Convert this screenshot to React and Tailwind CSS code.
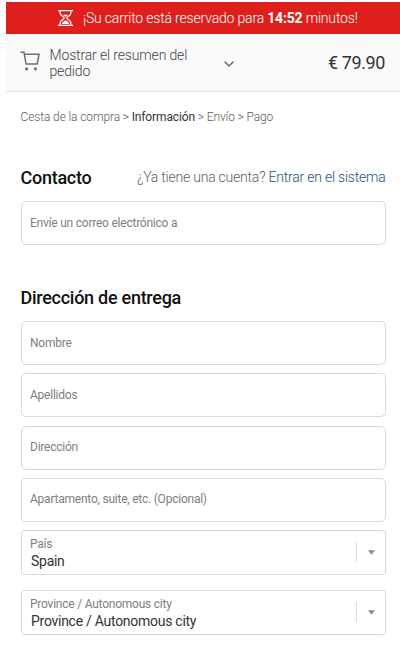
const ADDRESS_FIELDS = [
  { id: 'firstName', label: 'Nombre' },
  { id: 'lastName', label: 'Apellidos' },
  { id: 'address', label: 'Dirección' },
  { id: 'address2', label: 'Apartamento, suite, etc. (Opcional)' },
]

const SELECTS = [
  { id: 'country', label: 'País', value: 'Spain' },
  { id: 'province', label: 'Province / Autonomous city', value: 'Province / Autonomous city' },
]

export default function App() {
  return (
    <div className="h-[650px] w-[400px] overflow-hidden bg-white pl-1.5 pt-0.5 font-['Roboto',sans-serif]">
      <ReservationBar time="14:52" />
      <OrderSummary total="€ 79.90" />

      <main className="pl-[14.5px] pr-[14.5px]">
        <nav className="mt-[17px] h-4 whitespace-nowrap text-[12px] font-light leading-4 tracking-[-0.12px] text-[#5c5c5c]">
          Cesta de la compra {'>'} <span className="font-normal text-[#333]">Información</span> {'>'} Envío {'>'} Pago
        </nav>

        <section className="mt-10">
          <div className="flex h-6 items-center justify-between whitespace-nowrap">
            <h2 className="text-[18px] font-medium tracking-[-0.27px] text-[#111]">Contacto</h2>
            <p className="text-[14px] font-light tracking-[-0.22px] text-[#606060]">
              ¿Ya tiene una cuenta? <a className="text-[#28507f]">Entrar en el sistema</a>
            </p>
          </div>
          <div className="mt-3">
            <Field label="Envíe un correo electrónico a" />
          </div>
        </section>

        <section className="mt-10">
          <h2 className="flex h-6 items-center text-[18px] font-medium tracking-[-0.27px] text-[#111]">Dirección de entrega</h2>
          <div className="mt-3 flex flex-col gap-[8.3px]">
            {ADDRESS_FIELDS.map((f) => (
              <Field key={f.id} label={f.label} />
            ))}
          </div>
          <div className="mt-2 flex flex-col gap-[15px]">
            {SELECTS.map((s) => (
              <SelectField key={s.id} label={s.label} value={s.value} />
            ))}
          </div>
        </section>
      </main>
    </div>
  )
}

function ReservationBar({ time }) {
  return (
    <div className="flex h-8 items-center whitespace-nowrap bg-[#df1f1c] pl-[52px] text-[14px] tracking-[-0.18px] text-white">
      <HourglassIcon />
      <p className="ml-[10px] font-light">
        ¡Su carrito está reservado para <b className="font-bold">{time}</b> minutos!
      </p>
    </div>
  )
}

function OrderSummary({ total }) {
  return (
    <header className="flex h-[58px] items-center border-b border-[#e3e3e3] bg-[#fafafa] pl-[14px] pr-[15px]">
      <CartIcon />
      <p className="ml-[9.5px] w-[150px] text-[14px] font-light leading-4 tracking-[-0.15px] text-[#444]">
        Mostrar el resumen del pedido
      </p>
      <svg className="ml-[24.5px] mt-0.5 h-[6px] w-[10px] text-[#555]" viewBox="0 0 10 6" fill="none" stroke="currentColor" strokeWidth="1.3">
        <path d="M0.6 0.8L5 4.9L9.4 0.8" />
      </svg>
      <span className="ml-auto text-[18px] tracking-[-0.4px] text-[#333]">{total}</span>
    </header>
  )
}

function Field({ label }) {
  return (
    <div className="flex h-11 items-center rounded-[5px] border border-[#d9d9d9] bg-white px-[8.5px] pb-px text-[12px] tracking-[-0.23px] text-[#808080]">
      {label}
    </div>
  )
}

function SelectField({ label, value }) {
  return (
    <div className="flex h-[45px] items-center rounded-[3px] border border-[#d9d9d9] bg-white pl-[8.5px] pr-[10px]">
      <div className="pt-[3px]">
        <p className="text-[12px] leading-[14px] tracking-[-0.23px] text-[#808080]">{label}</p>
        <p className="pl-px pt-px text-[14px] leading-[18px] tracking-[-0.27px] text-[#333]">{value}</p>
      </div>
      <div className="ml-auto h-5 w-px bg-[#d9d9d9]" />
      <svg className="ml-[11px] h-[5px] w-[7px]" viewBox="0 0 7 5" fill="#8b8b8b">
        <path d="M0 0.3H7L3.5 4.8Z" />
      </svg>
    </div>
  )
}

function HourglassIcon() {
  return (
    <svg className="h-4 w-[15px]" viewBox="0 0 15 16" fill="none" stroke="currentColor" strokeWidth="1.3">
      <path d="M0 0.7H15M0 15.3H15" />
      <path d="M2.2 1V3.5C2.2 5.5 6.2 6.6 6.2 8S2.2 10.5 2.2 12.5V15M12.8 1V3.5C12.8 5.5 8.8 6.6 8.8 8S12.8 10.5 12.8 12.5V15" />
      <path d="M4.8 4.8H10.2L7.5 7ZM3.8 14C4 12 6 11.5 7.5 10.3C9 11.5 11 12 11.2 14Z" fill="currentColor" stroke="none" />
    </svg>
  )
}

function CartIcon() {
  return (
    <svg className="-mt-1 h-5 w-5" viewBox="0 0 20 20" fill="none" stroke="#707070" strokeWidth="1.5">
      <path d="M0.5 1.2H4L6 13H17.2L19 3.2H4.3" />
      <circle cx="6.6" cy="17.8" r="1.6" fill="#707070" stroke="none" />
      <circle cx="15.4" cy="17.8" r="1.6" fill="#707070" stroke="none" />
    </svg>
  )
}
